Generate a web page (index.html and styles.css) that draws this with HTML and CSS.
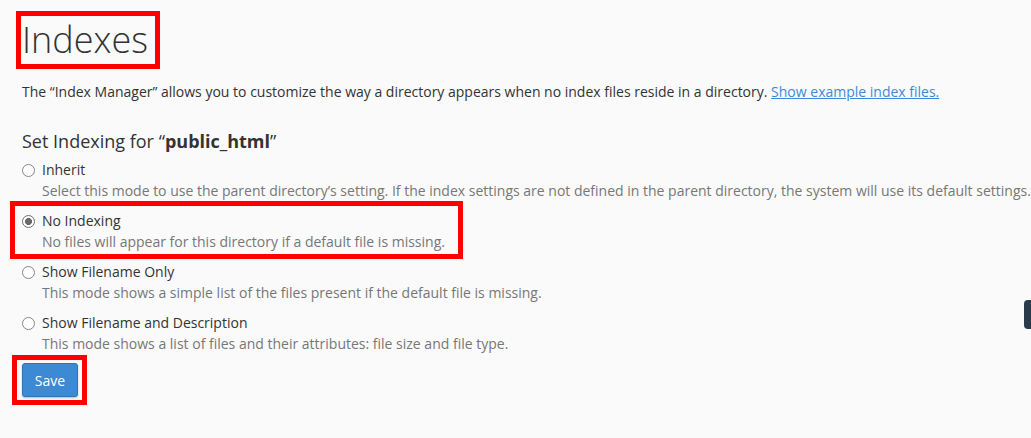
FILE: index.html
```html
<!DOCTYPE html>
<html lang="en">
<head>
<meta charset="utf-8">
<title>Indexes</title>
<link rel="stylesheet" href="styles.css">
</head>
<body>
<main class="page">
  <h1 class="title">Indexes</h1>
  <p class="intro">The “Index Manager” allows you to customize the way a directory appears when no index files reside in a directory. <a href="#" class="link">Show example index files.</a></p>
  <h2 class="subtitle">Set Indexing for “<strong>public_html</strong>”</h2>
  <form class="options">
    <div class="option">
      <label class="opt-label"><input type="radio" name="mode" class="radio"> Inherit</label>
      <div class="opt-desc">Select this mode to use the parent directory’s setting. If the index settings are not defined in the parent directory, the system will use its default settings.</div>
    </div>
    <div class="option marked-opt">
      <label class="opt-label"><input type="radio" name="mode" class="radio" checked> No Indexing</label>
      <div class="opt-desc">No files will appear for this directory if a default file is missing.</div>
    </div>
    <div class="option">
      <label class="opt-label"><input type="radio" name="mode" class="radio"> Show Filename Only</label>
      <div class="opt-desc">This mode shows a simple list of the files present if the default file is missing.</div>
    </div>
    <div class="option">
      <label class="opt-label"><input type="radio" name="mode" class="radio"> Show Filename and Description</label>
      <div class="opt-desc">This mode shows a list of files and their attributes: file size and file type.</div>
    </div>
    <div class="actions">
      <button type="button" class="btn-save">Save</button>
    </div>
  </form>
</main>
<div class="side-tab"></div>
</body>
</html>
```

FILE: styles.css
```css
html {
  overflow: hidden;
}

body {
  margin: 0;
  padding: 0;
  background: #fafafa;
  font-family: "Open Sans", "Liberation Sans", sans-serif;
  color: #333;
  font-size: 14px;
}

.page {
  padding: 0 0 0 22px;
  display: flex;
  flex-direction: column;
  align-items: flex-start;
}

.title {
  display: inline-block;
  margin: 17px 0 0 0;
  padding: 0 6px 0 0;
  font-weight: 300;
  font-size: 36px;
  line-height: 46px;
  color: #333;
  outline: 5px solid #ff0000;
  outline-offset: 1px;
}

.intro {
  margin: 19px 0 0 0;
  line-height: 20px;
  font-size: 14px;
}

.link {
  color: #3d8bd6;
  text-decoration: underline;
}

.subtitle {
  margin: 26px 0 0 0;
  font-size: 18px;
  font-weight: 400;
  line-height: 26px;
}

.subtitle strong {
  font-weight: 700;
}

.options {
  margin-top: 6px;
  display: flex;
  flex-direction: column;
  align-items: flex-start;
}

.option {
  margin-bottom: 10px;
}

.opt-label {
  display: flex;
  align-items: center;
  gap: 7px;
  line-height: 20px;
  font-size: 14px;
  color: #333;
}

.radio {
  appearance: none;
  -webkit-appearance: none;
  margin: 0;
  width: 13px;
  height: 13px;
  border: 1px solid #858585;
  border-radius: 50%;
  background: #fff;
  box-sizing: border-box;
}

.radio:checked {
  border-color: #6e6e6e;
  background: radial-gradient(circle at center, #6a6a6a 0, #6a6a6a 3.2px, #fff 3.8px);
}

.opt-desc {
  margin-top: 1px;
  padding-left: 20px;
  line-height: 20px;
  color: #777;
  font-size: 14px;
  white-space: nowrap;
}

.marked-opt {
  border: 5px solid #ff0000;
  padding: 5px 13px 2px 7px;
  margin: -10px 0 3px -12px;
}

.actions {
  margin-top: -9px;
  margin-left: -10px;
  border: 5px solid #ff0000;
  padding: 3px 4px 3px 5px;
}

.btn-save {
  display: block;
  font-family: "Open Sans", "Liberation Sans", sans-serif;
  font-size: 14px;
  color: #fff;
  background: #3b8ad3;
  border: 1px solid #2f74b4;
  border-radius: 3px;
  width: 56px;
  height: 34px;
  padding: 0;
  box-shadow: 0 1px 2px rgba(0,0,0,0.25);
}

.side-tab {
  position: fixed;
  right: 0;
  top: 300px;
  width: 7px;
  height: 29px;
  background: #293a4b;
  border-radius: 4px 0 0 4px;
}
```
